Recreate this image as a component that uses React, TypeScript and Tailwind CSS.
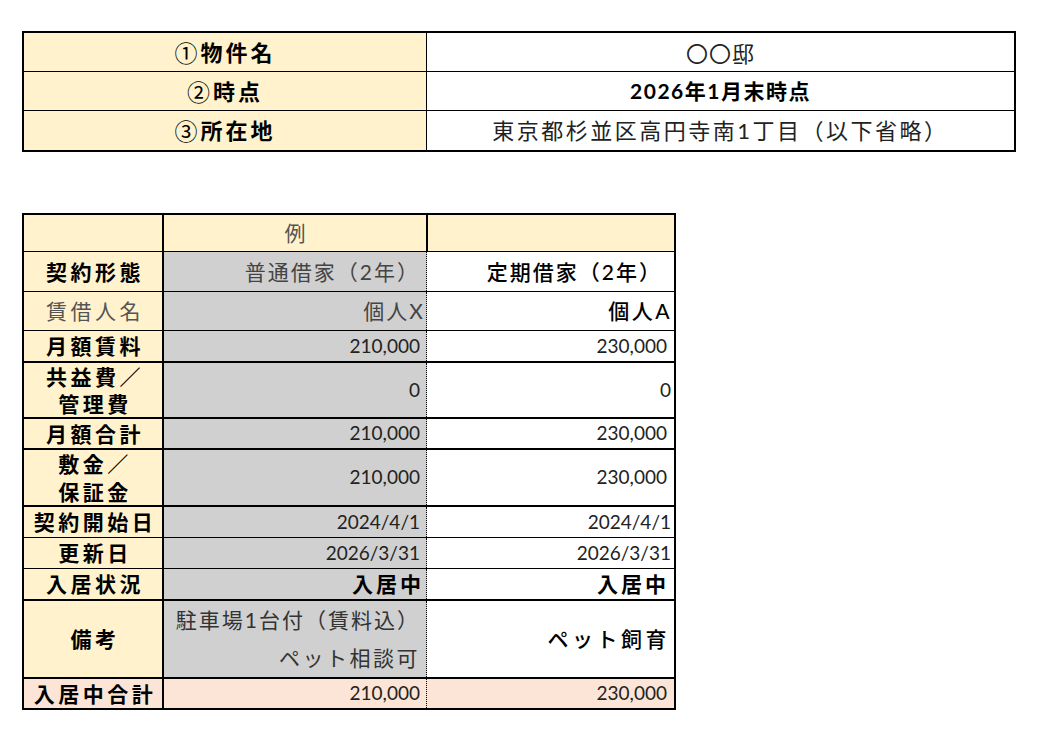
import * as React from 'react';

const font = { fontFamily: 'Lato, "Noto Sans CJK JP", sans-serif' };
const cjk = { fontFamily: '"Noto Sans CJK JP", sans-serif' };

interface Row {
  label: React.ReactNode;
  labelGray?: boolean;
  ex: React.ReactNode;
  val: React.ReactNode;
  h: string;
  border: string;
  exClass?: string;
  valClass?: string;
  bg?: string;
}

const rows: Row[] = [
  {
    label: '契約形態',
    ex: '普通借家（2年）',
    val: '定期借家（2年）',
    h: 'h-[40px]',
    border: 'border-b',
    exClass: 'text-[21px] text-[#444] tracking-[2px] pr-[6px]',
    valClass: 'text-[21px] font-medium text-black tracking-[2px] pr-[12px]',
  },
  {
    label: '賃借人名',
    labelGray: true,
    ex: '個人X',
    val: '個人A',
    h: 'h-[39px]',
    border: 'border-b',
    exClass: 'text-[21px] text-[#444] tracking-[2px] pr-[1px]',
    valClass: 'text-[21px] font-medium text-black tracking-[2.5px] pr-[2px]',
  },
  { label: '月額賃料', ex: '210,000', val: '230,000', h: 'h-[32px]', border: 'border-b-2' },
  {
    label: (
      <span className="leading-[27px] text-center">
        共益費／
        <br />
        管理費
      </span>
    ),
    ex: '0',
    val: '0',
    h: 'h-[56px]',
    border: 'border-b-2',
    valClass: 'text-[19px] text-[#222] pr-[3px]',
  },
  { label: '月額合計', ex: '210,000', val: '230,000', h: 'h-[31px]', border: 'border-b-2' },
  {
    label: (
      <span className="leading-[28px] text-center">
        敷金／
        <br />
        保証金
      </span>
    ),
    ex: '210,000',
    val: '230,000',
    h: 'h-[57px]',
    border: 'border-b-2',
  },
  {
    label: '契約開始日',
    ex: '2024/4/1',
    val: '2024/4/1',
    h: 'h-[31px]',
    border: 'border-b',
    valClass: 'text-[19px] text-[#222] pr-[3px]',
  },
  {
    label: '更新日',
    ex: '2026/3/31',
    val: '2026/3/31',
    h: 'h-[31px]',
    border: 'border-b',
    valClass: 'text-[19px] text-[#222] pr-[3px]',
  },
  {
    label: '入居状況',
    ex: '入居中',
    val: '入居中',
    h: 'h-[32px]',
    border: 'border-b-2',
    exClass: 'text-[21px] font-bold tracking-[3px] pr-[2px]',
    valClass: 'text-[21px] font-bold tracking-[3px] pr-[5px]',
  },
  {
    label: '備考',
    ex: (
      <div className="flex w-full flex-col items-end">
        <span className="leading-[38px] tracking-[2px]">駐車場1台付（賃料込）</span>
        <span className="leading-[38px] tracking-[2.5px]">ペット相談可</span>
      </div>
    ),
    val: 'ペット飼育',
    h: 'h-[78px]',
    border: 'border-b-2',
    exClass: 'text-[21px] text-[#333] pr-[6px]',
    valClass: 'text-[21px] font-medium text-black tracking-[3.5px] pr-[4px]',
  },
  { label: '入居中合計', ex: '210,000', val: '230,000', h: 'h-[29px]', border: '', bg: 'bg-[#fce4d6]' },
];

const Num: React.FC<{ n: string }> = ({ n }) => (
  <span style={cjk} className="text-[23px] font-normal">
    {n}
  </span>
);

const App: React.FC = () => {
  return (
    <div className="min-h-[742px] bg-white pl-[22px] pt-[31px] text-black" style={font}>
      {/* 物件情報 */}
      <div className="w-[994px] border-2 border-black">
        <div className="flex h-[39px] border-b border-black">
          <div className="flex w-[403px] items-center justify-center border-r border-black bg-[#fff2cc] text-[22px] font-bold tracking-[3px]">
            <Num n="①" />
            物件名
          </div>
          <div className="flex flex-1 items-center justify-center text-[22px] tracking-[1px] text-[#222]" style={cjk}>
            〇〇邸
          </div>
        </div>
        <div className="flex h-[39px] border-b border-black">
          <div className="flex w-[403px] items-center justify-center border-r border-black bg-[#fff2cc] text-[22px] font-bold tracking-[3px]">
            <Num n="②" />
            時点
          </div>
          <div className="flex flex-1 items-center justify-center text-[21px] font-bold tracking-[1.5px]">
            2026年1月末時点
          </div>
        </div>
        <div className="flex h-[39px]">
          <div className="flex w-[403px] items-center justify-center border-r border-black bg-[#fff2cc] text-[22px] font-bold tracking-[3px]">
            <Num n="③" />
            所在地
          </div>
          <div className="flex flex-1 items-center justify-center text-[22px] tracking-[2.5px] text-[#222]">
            東京都杉並区高円寺南1丁目（以下省略）
          </div>
        </div>
      </div>

      {/* 契約一覧 */}
      <div className="mt-[61px] w-[654px] border-2 border-black">
        <div className="flex h-[37px] border-b border-black bg-[#fff2cc]">
          <div className="w-[140px] border-r-2 border-black" />
          <div className="flex w-[264px] items-center justify-center border-r-2 border-black text-[21px] text-[#555]">
            例
          </div>
          <div className="flex-1" />
        </div>
        {rows.map((r, i) => (
          <div key={i} className={`flex ${r.h} ${r.border} border-black`}>
            <div
              className={`flex w-[140px] items-center justify-center border-r-2 border-black pl-[4px] text-[21px] tracking-[3.5px] ${
                r.bg ?? 'bg-[#fff2cc]'
              } ${r.labelGray ? 'text-[#555]' : 'font-semibold'}`}
            >
              {r.label}
            </div>
            <div
              className={`flex w-[263px] items-center justify-end border-r border-dotted border-black ${
                r.bg ?? 'bg-[#d0d0d0]'
              } ${r.exClass ?? 'text-[19px] text-[#222] pr-[6px]'}`}
            >
              {r.ex}
            </div>
            <div
              className={`flex flex-1 items-center justify-end ${r.bg ?? 'bg-white'} ${
                r.valClass ?? 'text-[19px] text-[#222] pr-[7px]'
              }`}
            >
              {r.val}
            </div>
          </div>
        ))}
      </div>
    </div>
  );
};

export default App;
